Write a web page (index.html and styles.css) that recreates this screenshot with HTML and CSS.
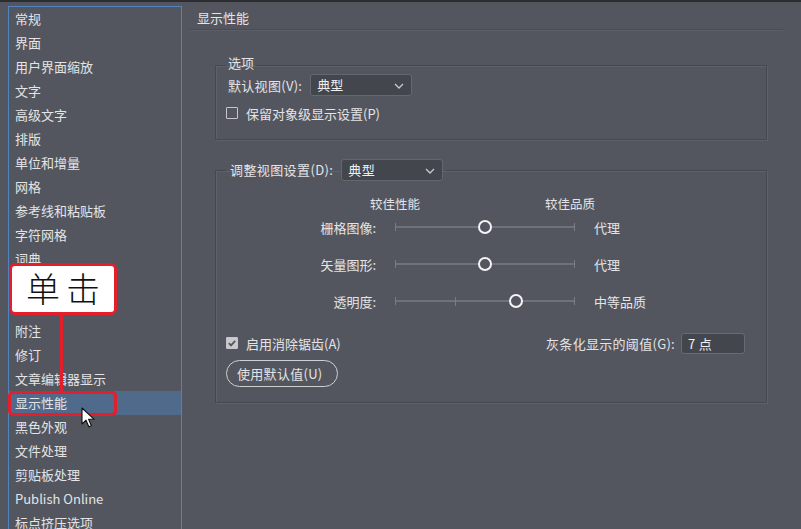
FILE: index.html
```html
<!DOCTYPE html>
<html lang="zh-CN">
<head>
    <meta charset="UTF-8">
    <title>首选项 - 显示性能</title>
    <link rel="stylesheet" href="styles.css">
</head>
<body>
    <div class="window">
        <ul class="nav">
            <li>常规</li>
            <li>界面</li>
            <li>用户界面缩放</li>
            <li>文字</li>
            <li>高级文字</li>
            <li>排版</li>
            <li>单位和增量</li>
            <li>网格</li>
            <li>参考线和粘贴板</li>
            <li>字符网格</li>
            <li>词典</li>
            <li>拼写检查</li>
            <li>自动更正</li>
            <li>附注</li>
            <li>修订</li>
            <li>文章编辑器显示</li>
            <li class="active">显示性能</li>
            <li>黑色外观</li>
            <li>文件处理</li>
            <li>剪贴板处理</li>
            <li>Publish Online</li>
            <li>标点挤压选项</li>
        </ul>

        <div class="pane">
            <div class="pane-title">显示性能</div>

            <fieldset class="group options">
                <legend>选项</legend>
                <div class="row">
                    <span>默认视图(V):</span>
                    <div class="select">典型
                        <svg class="chev" width="10" height="6" viewBox="0 0 10 6"><path d="M1 1l4 4 4-4" fill="none" stroke="#c8c9cc" stroke-width="1.3"/></svg>
                    </div>
                </div>
                <div class="check"><span class="box"></span>保留对象级显示设置(P)</div>
            </fieldset>

            <fieldset class="group adjust">
                <legend>
                    <span>调整视图设置(D):</span>
                    <div class="select">典型
                        <svg class="chev" width="10" height="6" viewBox="0 0 10 6"><path d="M1 1l4 4 4-4" fill="none" stroke="#c8c9cc" stroke-width="1.3"/></svg>
                    </div>
                </legend>

                <div class="heads">
                    <span>较佳性能</span>
                    <span>较佳品质</span>
                </div>

                <div class="sliders">
                    <span class="lbl">栅格图像:</span>
                    <div class="track"><i class="thumb" style="left:50%"></i></div>
                    <span>代理</span>

                    <span class="lbl">矢量图形:</span>
                    <div class="track"><i class="thumb" style="left:50%"></i></div>
                    <span>代理</span>

                    <span class="lbl">透明度:</span>
                    <div class="track"><b class="tick" style="left:33.3%"></b><i class="thumb" style="left:67.2%"></i></div>
                    <span>中等品质</span>
                </div>

                <div class="bottom-row">
                    <div class="check"><span class="box checked">
                        <svg width="10" height="10" viewBox="0 0 10 10"><path d="M1.8 5.2l2.2 2.2 4.2-4.6" fill="none" stroke="#55575e" stroke-width="1.8"/></svg>
                    </span>启用消除锯齿(A)</div>
                    <div class="threshold">
                        <span>灰条化显示的阈值(G):</span>
                        <div class="field">7 点</div>
                    </div>
                </div>

                <button class="pill">使用默认值(U)</button>
            </fieldset>
        </div>
    </div>

    <!-- annotation overlay -->
    <div class="callout">单击</div>
    <div class="callout-line"></div>
    <div class="callout-target"></div>
    <svg class="cursor" width="14" height="22" viewBox="0 0 14 22">
        <path d="M1 1v16l4-3.8 2.8 6.6 2.6-1.1-2.8-6.4h5.6z" fill="#fff" stroke="#111" stroke-width="1.1" stroke-linejoin="round"/>
    </svg>
</body>
</html>
```

FILE: styles.css
```css
* {
    box-sizing: border-box;
}

body {
    margin: 0;
    height: 529px;
    overflow: hidden;
    background: #53565e;
    border-top: 2px solid #2c2d31;
    color: #e4e4e6;
    font-family: "Noto Sans CJK SC", "Noto Sans", sans-serif;
    font-size: 13px;
    position: relative;
}

.window {
    display: flex;
    align-items: flex-start;
}

/* left category list */
.nav {
    list-style: none;
    margin: 4px 0 0 8px;
    padding: 0;
    width: 174px;
    height: 560px;
    border: 1px solid #4f84c0;
    border-bottom: none;
    flex-shrink: 0;
}

.nav li {
    height: 24px;
    line-height: 24px;
    padding-left: 6px;
    white-space: nowrap;
}

.nav li.active {
    background: #4f6a8a;
}

/* right pane */
.pane {
    flex: 1;
    padding: 0 18px 0 8px;
}

.pane-title {
    padding: 6px 0 1px 7px;
    line-height: 20px;
    border-bottom: 1px solid #4a4c53;
    box-shadow: 0 1px 0 #5c5f67;
}

.group {
    margin: 0 16px 0 25px;
    padding: 0 21px 15px 10px;
    border: 1px solid #46484f;
    box-shadow: inset 1px 1px 0 #5e616a, 1px 1px 0 #5e616a;
    min-width: 0;
}

.group legend {
    padding: 0 2px 4px;
    line-height: 14px;
}

.options {
    margin-top: 26px;
}

.row {
    display: flex;
    align-items: center;
    gap: 8px;
    height: 22px;
    padding-left: 2px;
}

.row span {
    letter-spacing: 0.3px;
}

.select {
    position: relative;
    width: 102px;
    height: 22px;
    line-height: 20px;
    padding-left: 6px;
    background: #44464d;
    border: 1px solid #64676e;
    border-radius: 3px;
    color: #f0f0f0;
}

.chev {
    position: absolute;
    right: 7px;
    top: 8px;
}

.check {
    display: flex;
    align-items: center;
    height: 22px;
    margin-top: 6px;
}

.box {
    width: 12px;
    height: 12px;
    border: 1px solid #c6c7ca;
    border-radius: 1px;
    margin-right: 8px;
    display: flex;
    align-items: center;
    justify-content: center;
}

.box.checked {
    background: #c9cacd;
}

.adjust {
    margin-top: 19px;
}

.adjust legend {
    display: flex;
    align-items: center;
    gap: 8px;
    padding: 0 2px 0 4px;
    line-height: 20px;
    letter-spacing: 0.4px;
}

.heads {
    display: flex;
    gap: 125px;
    margin-top: 15px;
    padding-left: 144px;
    line-height: 16px;
    font-size: 12.5px;
}

.sliders {
    display: grid;
    grid-template-columns: 150px 180px auto;
    column-gap: 19px;
    row-gap: 15px;
    grid-auto-rows: 22px;
    align-items: center;
    margin-top: 4px;
}

.lbl {
    text-align: right;
}

.track {
    position: relative;
    height: 22px;
}

.track::before {
    content: "";
    position: absolute;
    left: 0;
    right: 0;
    top: 10px;
    height: 2px;
    background: #6f727a;
}

.track::after {
    content: "";
    position: absolute;
    left: 0;
    right: 0;
    top: 7px;
    height: 8px;
    border-left: 1px solid #7a7d85;
    border-right: 1px solid #7a7d85;
}

.tick {
    position: absolute;
    top: 7px;
    width: 1px;
    height: 9px;
    background: #7a7d85;
}

.thumb {
    position: absolute;
    top: 4px;
    width: 14px;
    height: 14px;
    margin-left: -7px;
    border: 2.5px solid #f4f4f4;
    border-radius: 50%;
    background: #53565e;
    z-index: 1;
}

.bottom-row {
    display: flex;
    justify-content: space-between;
    align-items: center;
    margin-top: 20px;
    height: 22px;
}

.bottom-row .check {
    margin-top: 0;
}

.threshold {
    display: flex;
    align-items: center;
    gap: 6px;
    letter-spacing: 0.3px;
}

.field {
    width: 64px;
    height: 21px;
    line-height: 19px;
    padding-left: 6px;
    background: #44464d;
    border: 1px solid #686b72;
    border-radius: 3px;
    color: #f0f0f0;
}

.pill {
    display: block;
    margin-top: 6px;
    height: 27px;
    padding: 0 14px 0 10px;
    background: transparent;
    border: 1px solid #cfd0d3;
    border-radius: 14px;
    color: #e4e4e6;
    font-family: inherit;
    font-size: 13px;
    letter-spacing: 0.3px;
}

/* red annotation */
.callout {
    position: absolute;
    left: 9px;
    top: 261px;
    width: 108px;
    height: 52px;
    background: #fff;
    border: 3px solid #e41e2a;
    border-radius: 6px;
    color: #111;
    font-size: 34px;
    font-weight: 300;
    line-height: 44px;
    text-align: center;
    letter-spacing: 6px;
    padding-left: 6px;
}

.callout-line {
    position: absolute;
    left: 60px;
    top: 311px;
    width: 3px;
    height: 80px;
    background: #e41e2a;
}

.callout-target {
    position: absolute;
    left: 8px;
    top: 389px;
    width: 109px;
    height: 25px;
    border: 3px solid #e41e2a;
    border-radius: 5px;
}

.cursor {
    position: absolute;
    left: 81px;
    top: 405px;
}
```
